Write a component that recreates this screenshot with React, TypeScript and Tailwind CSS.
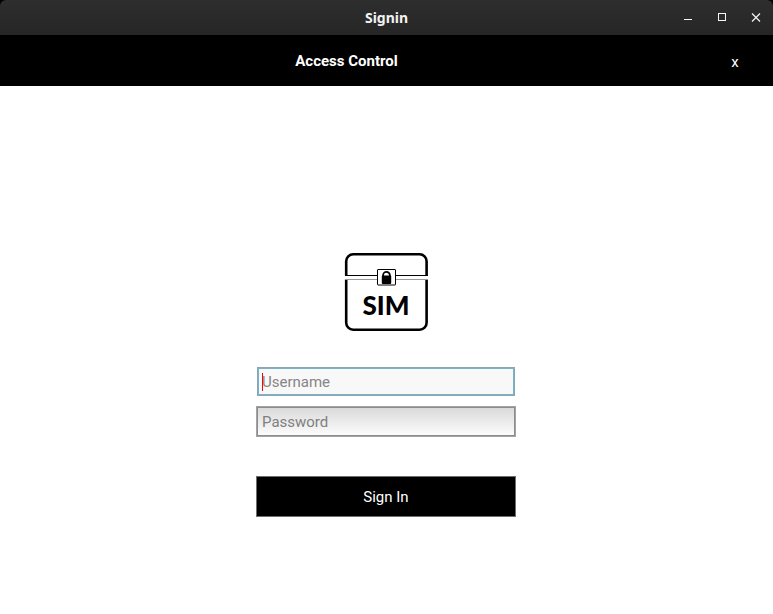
import React from "react";

function TitleBar() {
  return (
    <header className="bg-black">
      <div className="relative flex h-[35px] items-center justify-end rounded-t-md bg-linear-to-b from-[#2e2e2e] to-[#262626] pr-[7px]">
        <h1 className="absolute inset-x-0 text-center font-['Noto_Sans',sans-serif] text-sm font-bold text-[#f2f2f2]">
          Signin
        </h1>
        <div className="relative flex gap-[14px] text-[#f5f5f5]">
          <button type="button" aria-label="Minimize" className="size-5">
            <svg viewBox="0 0 20 20" className="size-5" fill="currentColor" shapeRendering="crispEdges">
              <rect x="6" y="11" width="8" height="1" />
            </svg>
          </button>
          <button type="button" aria-label="Maximize" className="size-5">
            <svg viewBox="0 0 20 20" className="size-5" fill="none" stroke="currentColor" shapeRendering="crispEdges">
              <rect x="6.5" y="5.5" width="7" height="7" />
            </svg>
          </button>
          <button type="button" aria-label="Close window" className="size-5">
            <svg viewBox="0 0 20 20" className="size-5" fill="none" stroke="currentColor" strokeWidth="1.2">
              <path d="M6 5.5l8 8M14 5.5l-8 8" />
            </svg>
          </button>
        </div>
      </div>
    </header>
  );
}

function Logo() {
  return (
    <svg viewBox="0 0 84 78" className="h-[78px] w-[84px]" role="img" aria-label="SIM">
      <rect x="2.2" y="1.3" width="80.4" height="75.4" rx="7" fill="#fff" stroke="#000" strokeWidth="2.6" />
      <rect x="0" y="22.5" width="84" height="4" fill="#fff" />
      <path d="M1 22.5h83" stroke="#000" strokeWidth="1" />
      <path d="M1 26.5h83" stroke="#999" strokeWidth="1" />
      <rect x="33.5" y="16.5" width="18" height="15.5" rx="0.5" fill="#fff" stroke="#000" strokeWidth="1" />
      <path d="M39.1 23.5v-1.2a3.4 3.4 0 0 1 6.8 0v1.2" fill="none" stroke="#000" strokeWidth="1.8" />
      <rect x="37.8" y="22.5" width="9.4" height="8.5" rx="1" fill="#000" />
      <text x="42" y="62" textAnchor="middle" className="fill-black font-['Lato',sans-serif] text-[26px] font-black">
        SIM
      </text>
    </svg>
  );
}

export default function App() {
  return (
    <div className="flex min-h-screen flex-col bg-white font-['Roboto',sans-serif] text-[15px] leading-5">
      <TitleBar />
      <div className="flex h-[51px] items-center bg-black text-white">
        <h2 className="flex-1 text-center font-bold">Access Control</h2>
        <button type="button" aria-label="x" className="h-full w-20 pt-0.5 pl-1">
          x
        </button>
      </div>
      <main className="flex flex-1 flex-col items-center pt-[167px] pr-px pb-8">
        <Logo />
        <form className="mt-9 flex w-[260px] flex-col">
          <div className="relative px-px">
            <input
              type="text"
              aria-label="Username"
              placeholder="Username"
              className="block h-[29px] w-full border-2 border-[#75b4cb] bg-[#f8f8f8] px-[3px] caret-red-600 outline-1 -outline-offset-1 outline-[#8fa5ad] placeholder:text-[#858585]"
            />
            <span aria-hidden="true" className="absolute top-1.5 left-1.5 h-[18px] w-px bg-[#f00]" />
          </div>
          <input
            type="password"
            aria-label="Password"
            placeholder="Password"
            className="mt-[10px] h-[31px] border-2 border-[#a3a3a3] bg-linear-to-b from-[#dadada] to-[#fcfcfc] px-1 outline-1 -outline-offset-2 outline-[#8c8c8c] placeholder:text-[#808080]"
          />
          <button type="submit" className="mt-[39px] h-[41px] border border-[#6e6e6e] bg-black text-white">
            Sign In
          </button>
        </form>
      </main>
    </div>
  );
}
